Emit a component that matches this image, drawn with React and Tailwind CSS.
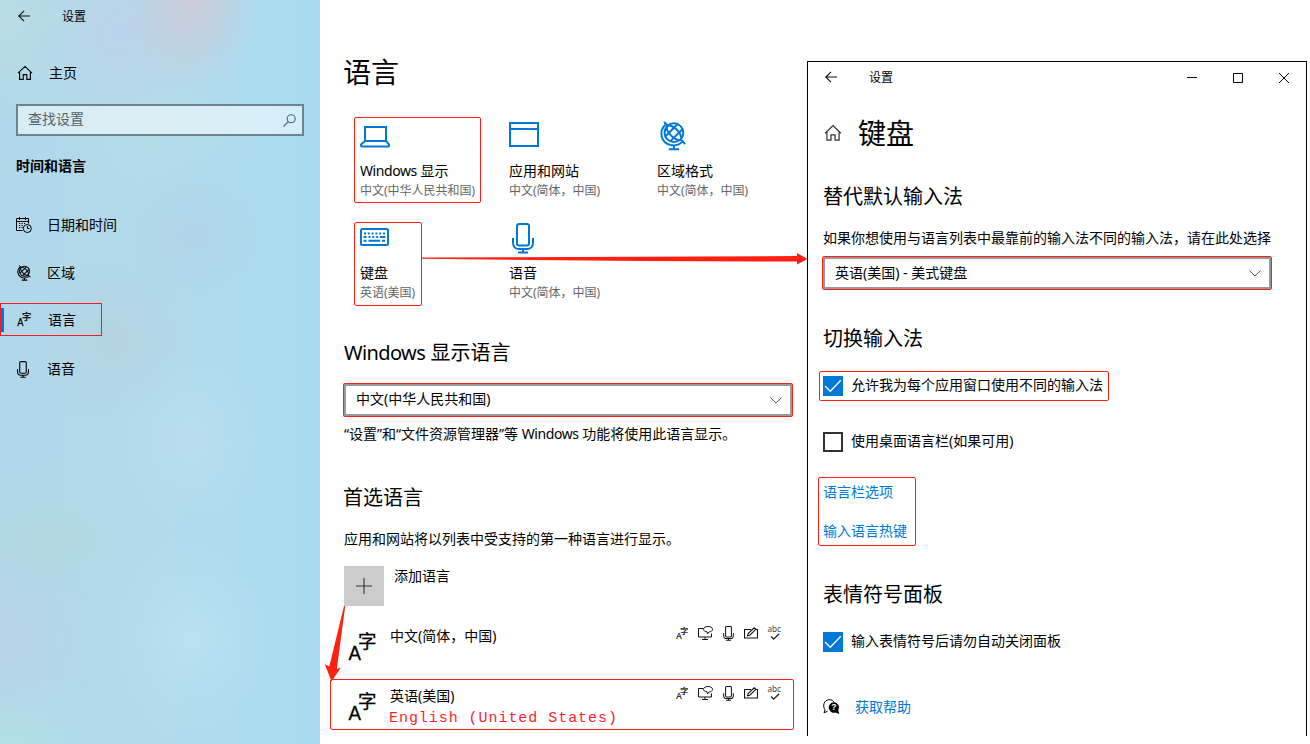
const RED = "#ff2014";

function BackArrow({ className = "" }) {
  return (
    <svg className={className} width="12" height="12" viewBox="0 0 12 12" fill="none" stroke="#111" strokeWidth="1.1">
      <path d="M12 6H.8M6 .8.8 6 6 11.2" />
    </svg>
  );
}

function HomeIcon({ size = 16, color = "#000" }) {
  return (
    <svg width={size} height={size} viewBox="0 0 16 16" fill="none" stroke={color} strokeWidth="1.1">
      <path d="M1 8.2 8 1.4l7 6.8M2.6 7v7.4h3.6V9.6h3.6v4.8h3.6V7" />
    </svg>
  );
}

function SearchIcon() {
  return (
    <svg width="13" height="13" viewBox="0 0 13 13" fill="none" stroke="#4f6470" strokeWidth="1.1">
      <circle cx="8.2" cy="4.8" r="4" />
      <path d="M5.3 7.7.5 12.5" />
    </svg>
  );
}

function CalendarIcon() {
  return (
    <svg width="16" height="16" viewBox="0 0 16 16" fill="none" stroke="#000" strokeWidth="1">
      <path d="M6.5 13.5h-6v-12h12v5M.5 4.5h12M3.5 0v3M9.500 0v3" />
      <path d="M3 6.500h1.200M5.500 6.500h1.200M8 6.500h1.200M3 8.500h1.200M5.500 8.500h1.200M3 10.500h1.200M5.500 10.500h1.200" strokeWidth="1.1" />
      <circle cx="11.300" cy="11.500" r="4" />
      <path d="M11.500 9v2.500h2" />
    </svg>
  );
}

function GlobeIcon({ size = 16, color = "#000", strokeWidth = 2.1 }) {
  return (
    <svg width={size} height={size} viewBox="0 0 30 32" fill="none" stroke={color} strokeWidth={strokeWidth}>
      <g transform="rotate(-45 16 12.500)">
        <circle cx="16" cy="12.500" r="10" />
        <ellipse cx="16" cy="12.500" rx="4.400" ry="10" />
        <path d="M7 8.800h18M7 16.200h18" />
      </g>
      <path d="M5.500 1 9.500 5M23.500 20l4.500 4.500M6.800 4C-.5 11.500 2 22.500 12 25.500c4.800 1.200 9.500.2 13-3.500M16 26v4M10.500 30.200h11" />
    </svg>
  );
}

function LanguageIcon({ size = 16, color = "#000", heavy = false }) {
  return (
    <svg className="overflow-visible" width={size} height={size} viewBox="0 0 28 30" fill={color} stroke={color} strokeWidth={heavy ? 0.3 : 0.5}>
      <text x="-.6" y="28.500" fontSize="21" textLength="12.500" lengthAdjust="spacingAndGlyphs" className="font-['Liberation_Sans']">A</text>
      <text x="9" y="16.500" fontSize="18.500" className="font-['Noto_Sans_CJK_SC']">字</text>
    </svg>
  );
}

function MicIcon({ width = 12, height = 17, color = "#000", strokeWidth = 2 }) {
  return (
    <svg width={width} height={height} viewBox="0 0 22 31" fill="none" stroke={color} strokeWidth={strokeWidth}>
      <rect x="5" y="1" width="12" height="21.500" rx="2.200" />
      <path d="M1 15v4.500c0 4 2.500 6.500 6 6.500h8c3.500 0 6-2.500 6-6.500V15M11 26v3.500M6 29.600h10" />
    </svg>
  );
}

function LaptopIcon() {
  return (
    <svg width="30" height="22" viewBox="0 0 30 22" fill="none" stroke="#0078d7" strokeWidth="2">
      <path d="M5 15V1h21v14M5 15h21l3 3.500c.3 1.500-.3 2-1.200 2H2.200c-1 0-1.500-.5-1.200-2z" />
    </svg>
  );
}

function WindowIcon() {
  return (
    <svg width="30" height="25" viewBox="0 0 30 25" fill="none" stroke="#0078d7" strokeWidth="2">
      <path d="M1 1h28v23H1zM1 7h28" />
    </svg>
  );
}

function KeyboardIcon() {
  return (
    <svg width="29" height="18" viewBox="0 0 29 18" fill="none" stroke="#0078d7" strokeWidth="2">
      <rect x="1" y="1" width="27" height="16" rx="1.500" />
      <path d="M4 5.500h21" strokeDasharray="2 1.800" />
      <path d="M3.500 9h3M8.500 9h2M12.300 9h2M16.200 9h2M20 9h5.500M3.500 12.800h3M8.500 12.800h11.500M22 12.800h3" />
    </svg>
  );
}

function DisplaySpeechIcon() {
  return (
    <svg width="15" height="14" viewBox="0 0 15 14" fill="none" stroke="#111" strokeWidth="1">
      <path d="M5 2.500H.5v8.500h13V7.500M7 11v2.500M4 13.500h6" />
      <path d="M9 5.800C6.500 5.500 5.500 4.500 5.500 3.300 5.500 1.500 7.500.5 10 .5s4.500 1 4.500 2.800-1.800 2.600-3.300 2.600L9.500 7.800z" />
    </svg>
  );
}

function PenIcon() {
  return (
    <svg width="14" height="13" viewBox="0 0 14 13" fill="none" stroke="#111" strokeWidth="1.1">
      <path d="M7 2.500H.5v8.500h13V2.500h-1.500M3.500 8.800l.6-2.300L10.200.8l1.600 1.500-6 5.900z" />
    </svg>
  );
}

function SpellIcon() {
  return (
    <svg className="overflow-visible" width="14" height="16" viewBox="0 0 14 16" fill="none" stroke="#222">
      <text x="-.5" y="7.300" fontSize="9" fill="#444" stroke="none" textLength="13.500" lengthAdjust="spacingAndGlyphs" className="font-['Noto_Sans']">abc</text>
      <path d="m3 11.500 2.700 2.700 5.500-5.400" strokeWidth="1.300" />
    </svg>
  );
}

function HelpIcon() {
  return (
    <svg width="17" height="17" viewBox="0 0 17 17" fill="none" stroke="#000">
      <path d="M4.500 12.300 1 13.800l1-3C-.8 7 1 1 6 .7c2.500-.1 4.300 1 5.300 2.800" strokeWidth="1" />
      <path d="M10.700 3.200a5.300 5.300 0 0 1 4.600 8l.9 3.900-3.800-1.500a5.300 5.300 0 1 1-1.700-10.400z" fill="#000" stroke="none" />
      <text x="8.300" y="11.400" fontSize="8.500" fontWeight="bold" fill="#fff" stroke="none" className="font-['Liberation_Sans']">?</text>
    </svg>
  );
}

function NavItem({ icon, label, className = "" }) {
  return (
    <div className={`flex h-12 items-center pl-4 ${className}`}>
      <span className="flex w-[31px] shrink-0 items-center">{icon}</span>
      <span>{label}</span>
    </div>
  );
}

function Sidebar() {
  return (
    <aside className="flex h-[744px] w-[320px] shrink-0 flex-col bg-[radial-gradient(ellipse_70px_95px_at_191px_0px,#cbcbd9_0%,#cbcbd9b0_35%,#cbcbd940_70%,#cbcbd900_100%),radial-gradient(ellipse_90px_100px_at_118px_34px,#bcd3ea_0%,#bcd3ea90_35%,#bcd3ea28_70%,#bcd3ea00_100%),radial-gradient(ellipse_110px_110px_at_0px_20px,#b9dde2_0%,#b9dde290_35%,#b9dde228_70%,#b9dde200_100%),radial-gradient(ellipse_90px_110px_at_192px_637px,#b9e1f1_0%,#b9e1f190_35%,#b9e1f128_70%,#b9e1f100_100%),radial-gradient(ellipse_90px_100px_at_190px_440px,#b9deee_0%,#b9deee90_35%,#b9deee28_70%,#b9deee00_100%),radial-gradient(ellipse_110px_110px_at_0px_640px,#bad4e8_0%,#bad4e890_35%,#bad4e828_70%,#bad4e800_100%),radial-gradient(ellipse_120px_80px_at_0px_744px,#b3e0e5_0%,#b3e0e590_35%,#b3e0e528_70%,#b3e0e500_100%),radial-gradient(ellipse_120px_80px_at_50px_540px,#b2d9e2_0%,#b2d9e290_35%,#b2d9e228_70%,#b2d9e200_100%),radial-gradient(ellipse_90px_90px_at_115px_340px,#b4d2e1_0%,#b4d2e190_35%,#b4d2e128_70%,#b4d2e100_100%),radial-gradient(ellipse_80px_80px_at_195px_235px,#afd3e6_0%,#afd3e690_35%,#afd3e628_70%,#afd3e600_100%),radial-gradient(ellipse_110px_90px_at_160px_130px,#b5dce9_0%,#b5dce990_35%,#b5dce928_70%,#b5dce900_100%),linear-gradient(90deg,#b0d8ea_0%,#b2daea_50%,#abdcef_80%,#a9daef_100%)]">
      <div className="flex h-[33px] items-center pl-[18px] text-xs">
        <BackArrow className="-mt-[2px]" />
        <span className="pl-8">设置</span>
      </div>
      <div className="mt-4 flex h-12 items-center pl-[17px]">
        <HomeIcon />
        <span className="pl-4">主页</span>
      </div>
      <div className="mx-4 mt-[7px] flex h-8 items-center justify-between border-2 border-[#6d8590] bg-white/50 pr-1.5 pl-[10px] text-[#50646f]">
        <span className="relative -top-px">查找设置</span>
        <SearchIcon />
      </div>
      <div className="mt-[18px] flex h-6 items-center pl-4 font-bold">时间和语言</div>
      <nav className="mt-[23px] flex flex-col">
        <NavItem icon={<CalendarIcon />} label="日期和时间" />
        <NavItem icon={<GlobeIcon />} label="区域" />
        <div className="flex h-12 items-center">
          <div className="-mt-[3px] flex h-[33px] w-[102px] items-center border border-[#f01c28]">
            <span className="h-6 w-[3px] bg-[#0078d7]" />
            <span className="flex w-[44px] items-center pl-[13px]"><LanguageIcon size={15} /></span>
            <span>语言</span>
          </div>
        </div>
        <NavItem icon={<span className="pl-px"><MicIcon /></span>} label="语音" />
      </nav>
    </aside>
  );
}

function Tile({ icon, title, sub, boxed = false, className = "" }) {
  return (
    <div className={`flex flex-col items-start rounded-[2px] border pl-[5px] ${boxed ? "border-[#ff2014]" : "border-transparent"} ${className}`}>
      <div className="flex items-start">{icon}</div>
      <div className="mt-auto h-5 leading-5 whitespace-nowrap">{title}</div>
      <div className="h-[19px] text-xs leading-[20px] whitespace-nowrap text-[#666]">{sub}</div>
    </div>
  );
}

function Select({ value, valueClass = "" }) {
  return (
    <div className="h-[34px] w-[450px] rounded-[2px] border border-[#ff2014]">
      <div className="flex h-8 items-center justify-between border-2 border-[#999] pr-2 pl-[10px]">
        <span className={valueClass}>{value}</span>
        <svg width="12" height="7" viewBox="0 0 12 7" fill="none" stroke="#555" strokeWidth="1">
          <path d="m.4.500 5.600 5.600L11.600.500" />
        </svg>
      </div>
    </div>
  );
}

function LanguageRow({ title, sub }) {
  return (
    <div className="flex h-[49px] items-start">
      <div className="flex w-[59px] justify-start pt-[11px] pl-[17px]"><LanguageIcon size={30} heavy /></div>
      <div className="flex w-[286px] flex-col pt-1.5">
        <span className="h-5 leading-5">{title}</span>
        {sub && <span className="-ml-px h-5 font-['Liberation_Mono',monospace] text-[15px] leading-[25px] tracking-[0.95px] whitespace-nowrap text-[#ff1a2e]">{sub}</span>}
      </div>
      <div className="flex h-[26px] items-center">
        <span className="w-[22px]"><LanguageIcon size={13} /></span>
        <span className="w-[25px]"><DisplaySpeechIcon /></span>
        <span className="w-[21px]"><MicIcon width={11} height={15} strokeWidth={2.1} color="#111" /></span>
        <span className="w-6"><PenIcon /></span>
        <span><SpellIcon /></span>
      </div>
    </div>
  );
}

function Latin({ children }) {
  return <span className="tracking-[-0.03em]">{children}</span>;
}

function LanguagePage() {
  return (
    <main className="flex h-[744px] w-[487px] shrink-0 flex-col">
      <h1 className="mt-[52px] h-[41px] pl-[23px] text-[28px] leading-10">语言</h1>
      <div className="mt-6 ml-[34px] flex">
        <Tile boxed className="h-[86px] w-[127px] pt-2 pb-[2px]" icon={<LaptopIcon />} title={<><Latin>Windows</Latin> 显示</>} sub="中文(中华人民共和国)" />
        <Tile className="ml-[22px] h-[86px] w-[127px] pt-2 pb-[2px]" icon={<span className="-mt-[4px]"><WindowIcon /></span>} title="应用和网站" sub="中文(简体，中国)" />
        <Tile className="ml-[21px] h-[86px] w-[127px] pt-2 pb-[2px]" icon={<span className="-mt-[5px] pl-px"><GlobeIcon size={30} color="#0078d7" /></span>} title="区域格式" sub="中文(简体，中国)" />
      </div>
      <div className="mt-[19px] ml-[34px] flex">
        <Tile boxed className="h-[84px] w-[68px] pt-[5px] pb-[3px]" icon={<KeyboardIcon />} title="键盘" sub="英语(美国)" />
        <Tile className="ml-[81px] h-[84px] w-[127px] pt-[5px] pb-[3px]" icon={<span className="-mt-[5px] pl-[3px]"><MicIcon width={22} height={31} color="#0078d7" /></span>} title="语音" sub="中文(简体，中国)" />
      </div>
      <h2 className="mt-8 h-7 pl-6 text-xl leading-[29px]"><Latin>Windows</Latin> 显示语言</h2>
      <div className="mt-[17px] pl-[23px]"><Select value="中文(中华人民共和国)" valueClass="-mt-0.5" /></div>
      <p className="mt-[7px] h-5 pl-6 leading-5">“设置”和“文件资源管理器”等 <Latin>Windows</Latin> 功能将使用此语言显示。</p>
      <h2 className="mt-[39px] h-7 pl-[23px] text-xl leading-[30px]">首选语言</h2>
      <p className="mt-[18px] h-5 pl-6 leading-5">应用和网站将以列表中受支持的第一种语言进行显示。</p>
      <div className="mt-[17px] flex h-10 pl-6">
        <div className="flex size-10 items-center justify-center bg-[#ccc]">
          <svg width="16" height="16" viewBox="0 0 16 16" stroke="#333" strokeWidth="1.100"><path d="M8 0v16M0 8h16" /></svg>
        </div>
        <span className="pl-[10px] leading-5">添加语言</span>
      </div>
      <div className="mt-[14px] pl-[11px]"><LanguageRow title="中文(简体，中国)" /></div>
      <div className="mt-[10px] ml-[10px] h-[51px] w-[464px] rounded-[2px] border border-[#ff2014]">
        <LanguageRow title="英语(美国)" sub="English (United States)" />
      </div>
    </main>
  );
}

function Checkbox({ checked = false, label }) {
  return (
    <div className="flex h-5 items-center">
      {checked ? (
        <span className="flex size-5 items-center justify-center bg-[#0078d7]">
          <svg width="18" height="14" viewBox="0 0 18 14" fill="none" stroke="#fff" strokeWidth="1.300"><path d="m1 7 5.300 5.300L16.800 1.200" /></svg>
        </span>
      ) : (
        <span className="size-5 border-2 border-[#333]" />
      )}
      <span className="relative -top-px pl-2 whitespace-nowrap">{label}</span>
    </div>
  );
}

function KeyboardWindow() {
  return (
    <section className="mt-[61px] flex h-[675px] w-[500px] shrink-0 flex-col border-x border-t border-black bg-white">
      <header className="flex h-[31px] items-center pl-[17px] text-xs">
        <BackArrow className="-mt-[2px]" />
        <span className="pl-8">设置</span>
        <svg className="ml-auto" width="10" height="11" viewBox="0 0 10 11" stroke="#000"><path d="M0 5.500h10" /></svg>
        <svg className="ml-9" width="10" height="10" viewBox="0 0 10 10" fill="none" stroke="#000"><path d="M.5.500h9v9h-9z" /></svg>
        <svg className="mr-[17px] ml-9" width="10" height="10" viewBox="0 0 10 10" fill="none" stroke="#000"><path d="m0 0 10 10M10 0 0 10" /></svg>
      </header>
      <h1 className="mt-5 flex h-10 items-center pl-4 text-[28px] leading-10">
        <HomeIcon size={18} color="#333" />
        <span className="pl-4">键盘</span>
      </h1>
      <h2 className="mt-[29px] h-7 pl-[15px] text-xl leading-[30px]">替代默认输入法</h2>
      <p className="mt-[18px] h-5 pl-[15px] leading-5 whitespace-nowrap">如果你想使用与语言列表中最靠前的输入法不同的输入法，请在此处选择</p>
      <div className="mt-2 pl-[14px]"><Select value="英语(美国) - 美式键盘" /></div>
      <h2 className="mt-[34px] h-7 pl-[15px] text-xl leading-[30px]">切换输入法</h2>
      <div className="mt-[19px] ml-[11px] h-[30px] w-[290px] rounded-[2px] border border-[#ff2014] pt-1 pl-[3px]">
        <Checkbox checked label="允许我为每个应用窗口使用不同的输入法" />
      </div>
      <div className="mt-[31px] pl-[15px]"><Checkbox label="使用桌面语言栏(如果可用)" /></div>
      <div className="mt-[25px] ml-[10px] flex h-[69px] w-[98px] flex-col gap-[19px] rounded-[2px] border border-[#ff2014] pt-1 pl-1 text-[#0078d7]">
        <a className="leading-5">语言栏选项</a>
        <a className="leading-5">输入语言热键</a>
      </div>
      <h2 className="mt-[34px] h-7 pl-[15px] text-xl leading-[30px]">表情符号面板</h2>
      <div className="mt-6 pl-[15px]"><Checkbox checked label="输入表情符号后请勿自动关闭面板" /></div>
      <div className="mt-[45px] flex h-5 items-center pl-[15px]">
        <HelpIcon />
        <a className="pl-[15px] text-[#0078d7]">获取帮助</a>
      </div>
    </section>
  );
}

export default function App() {
  return (
    <div className="relative flex h-[744px] w-[1310px] overflow-hidden bg-white font-['Noto_Sans','Noto_Sans_CJK_SC',sans-serif] text-sm leading-5 text-black" lang="zh-CN">
      <Sidebar />
      <LanguagePage />
      <KeyboardWindow />
      <svg className="pointer-events-none absolute inset-0" width="1310" height="744" viewBox="0 0 1310 744" fill={RED}>
        <path d="M422 257.600 797 256v-3l10.500 6-10.500 5.500v-3L640 261 422 258.800z" />
        <path d="m344 606 1.200.200-8.400 63 4.200-1.800-9.500 14-6.700-17.200 4.500 2.300z" />
      </svg>
    </div>
  );
}
